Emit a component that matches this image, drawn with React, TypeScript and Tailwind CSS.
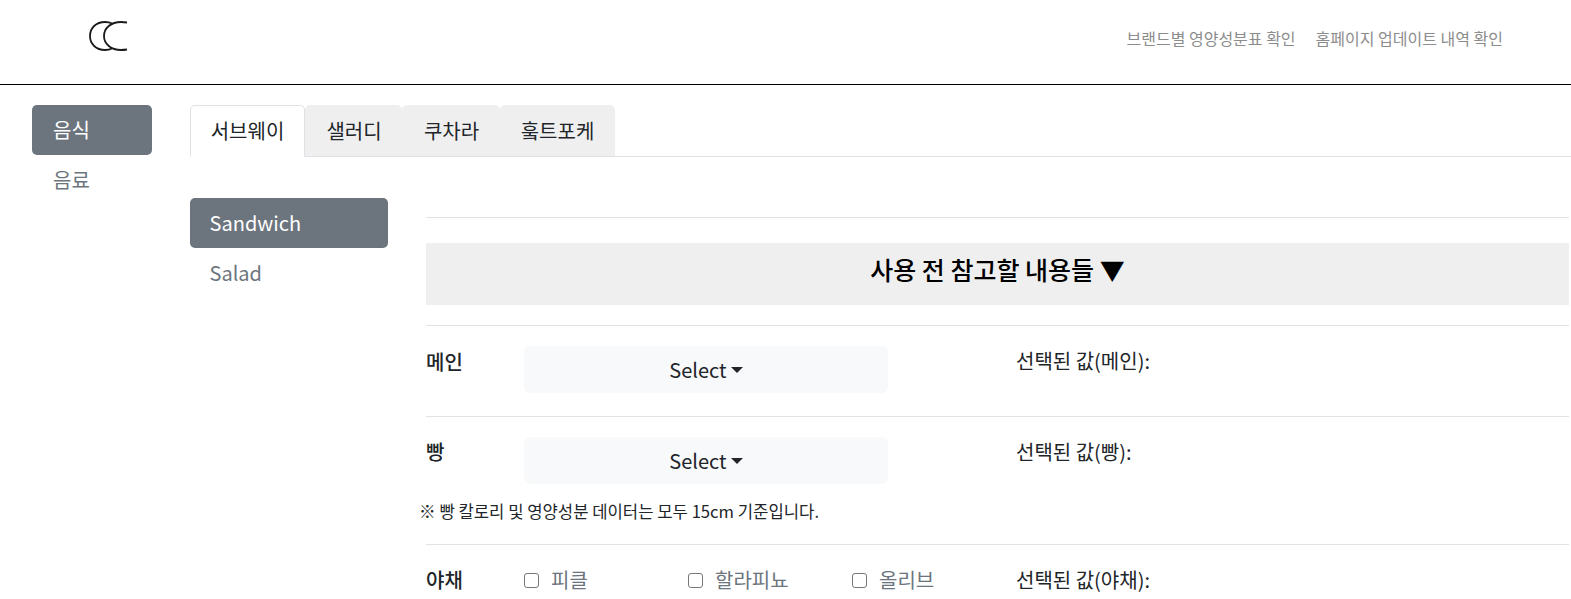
const font = { fontFamily: '"Noto Sans CJK KR", "Noto Sans", sans-serif' };

function Rule() {
  return <div className="h-px bg-[#e2e2e2]" />;
}

function SelectBtn() {
  return (
    <button className="w-[364px] h-[47px] rounded-md bg-[#f8f9fa] text-[#212529] text-[20px] flex items-center justify-center">
      <span>Select</span>
      <span className="ml-[4px] w-0 h-0 border-x-[6px] border-x-transparent border-t-[6px] border-t-[#212529]" />
    </button>
  );
}

function Check({ label }: { label: string }) {
  return (
    <label className="flex items-center w-[164px] text-[20px] text-[#6c757d]">
      <span className="w-[15px] h-[15px] rounded-[3px] border border-[#767676] bg-white mr-[12px]" />
      {label}
    </label>
  );
}

export default function App() {
  return (
    <div className="h-[599px] w-[1571px] overflow-hidden bg-white text-[#212529] text-[20px]" style={font}>
      <header className="h-[85px] border-b border-black flex items-center justify-between pl-[88px] pr-[68px]">
        <svg width="41" height="32" viewBox="0 0 41 32" fill="none" stroke="#1a1a1a" strokeWidth="1.8" className="mb-[12px]">
          <path d="M24 3.5C22 2.5 19.5 2 17 2C8 2 2 8 2 16C2 24 8 30 17 30C19.5 30 22 29.5 24 28.5" />
          <path d="M39 2.5C37 2.2 35 2 33 2C23 2 16 8 16 16C16 24 23 30 33 30C35 30 37 29.8 39 29.5" />
        </svg>
        <nav className="flex gap-[20px] text-[16px] text-[#8c8c8c] mb-[8px]">
          <span>브랜드별 영양성분표 확인</span>
          <span>홈페이지 업데이트 내역 확인</span>
        </nav>
      </header>

      <div className="flex pt-5 pl-8">
        <aside className="w-[120px] shrink-0">
          <div className="h-[50px] rounded-[5px] bg-[#6c757d] text-white px-[21px] flex items-center">음식</div>
          <div className="h-[50px] px-[21px] flex items-center text-[#6c757d]">음료</div>
        </aside>

        <main className="ml-[38px] flex-1 min-w-0">
          <div className="flex h-[52px] border-b border-[#dee2e6] mr-[-1px]">
            <div className="h-[52px] w-[115px] rounded-t-[5px] border border-[#dee2e6] border-b-white bg-white flex items-center justify-center">서브웨이</div>
            <div className="h-[51px] w-[97px] pl-px rounded-t-[5px] bg-[#efefef] flex items-center justify-center">샐러디</div>
            <div className="h-[51px] w-[98px] pl-px rounded-t-[5px] bg-[#efefef] flex items-center justify-center">쿠차라</div>
            <div className="h-[51px] w-[115px] rounded-t-[5px] bg-[#efefef] flex items-center justify-center">훜트포케</div>
          </div>

          <div className="flex pt-[41px]">
            <div className="w-[198px] shrink-0">
              <div className="h-[50px] rounded-[5px] bg-[#6c757d] text-white pl-[19.5px] flex items-center">Sandwich</div>
              <div className="h-[50px] pl-[19.5px] flex items-center text-[#6c757d]">Salad</div>
            </div>

            <div className="ml-[38px] w-[1143px] shrink-0 pt-[19px]">
              <Rule />
              <div className="mt-[25px] h-[62px] pb-[8px] bg-[#efefef] flex items-center justify-center text-[25px] font-medium text-black">
                사용 전 참고할 내용들 ▼
              </div>
              <div className="mt-[20px]"><Rule /></div>

              <div className="flex h-[90px] pt-5">
                <div className="w-[98px] font-medium leading-[30px] pt-px">메인</div>
                <SelectBtn />
                <div className="ml-[128px] leading-[30px]">선택된 값(메인):</div>
              </div>
              <Rule />

              <div className="flex h-[66px] pt-5">
                <div className="w-[98px] font-medium leading-[30px]">빵</div>
                <SelectBtn />
                <div className="ml-[128px] leading-[30px]">선택된 값(빵):</div>
              </div>
              <div className="h-[61px] ml-[-7px] pt-[16px] text-[16.67px] leading-[24px]">※ 빵 칼로리 및 영양성분 데이터는 모두 15cm 기준입니다.</div>
              <Rule />

              <div className="flex pt-[20px] leading-[30px]">
                <div className="w-[98px] font-medium">야채</div>
                <Check label="피클" />
                <Check label="할라피뇨" />
                <Check label="올리브" />
                <div>선택된 값(야채):</div>
              </div>
            </div>
          </div>
        </main>
      </div>
    </div>
  );
}
